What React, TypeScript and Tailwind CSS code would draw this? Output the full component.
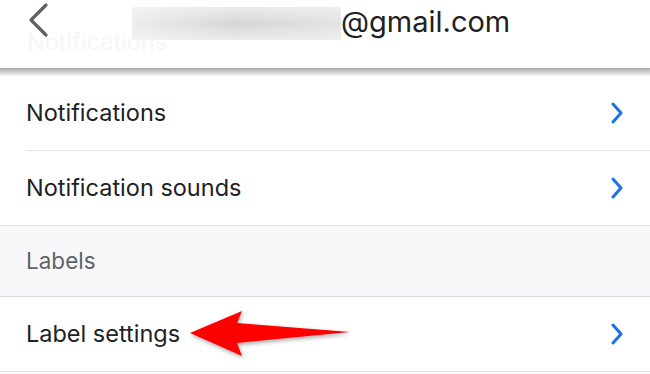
import React from "react";

const font = { fontFamily: "Inter, 'Noto Sans', 'Liberation Sans', sans-serif" };

function Chevron() {
  return (
    <svg width="14" height="22" viewBox="0 0 14 22" className="shrink-0">
      <path d="M3 2 L11 11 L3 20" fill="none" stroke="#1a73e8" strokeWidth="3" strokeLinecap="round" strokeLinejoin="round" />
    </svg>
  );
}

export default function App() {
  return (
    <div className="w-[650px] h-[374px] bg-white overflow-hidden relative text-[#202124]" style={font}>
      {/* header */}
      <div className="relative h-[68px] bg-white">
        <div className="absolute left-[27px] top-[30px] text-[23.5px] text-[#f6f6f6] leading-none">Notifications</div>
        <svg className="absolute left-[24px] top-[2px]" width="28" height="36" viewBox="0 0 28 36">
          <path d="M22 3 L7 18 L22 33" fill="none" stroke="#5f6368" strokeWidth="3.2" strokeLinecap="round" strokeLinejoin="round" />
        </svg>
        <div className="absolute left-[132px] top-[7px] w-[209px] h-[33px] bg-gradient-to-r from-[#ededed] via-[#d6d6d6] to-[#e2e2e2]">
          <div className="w-full h-full bg-gradient-to-b from-[#f4f4f4]/70 via-transparent to-[#f4f4f4]/70" />
        </div>
        <div className="absolute left-[341px] top-[2px] text-[29px] leading-[40px] text-[#202124]">@gmail.com</div>
      </div>
      {/* shadow bar */}
      <div className="h-[8px] bg-gradient-to-b from-[#a9a9a9] via-[#cfcfcf] to-[#f4f4f4]" />
      {/* rows */}
      <div className="pl-[26px]">
        <div className="h-[75px] flex items-center justify-between pr-[26px] border-b border-[#e6e6e6]">
          <span className="text-[23.5px]">Notifications</span>
          <Chevron />
        </div>
      </div>
      <div className="h-[75px] flex items-center justify-between pl-[26px] pr-[26px] border-b border-[#e2e2e2]">
        <span className="text-[23.5px]">Notification sounds</span>
        <Chevron />
      </div>
      <div className="h-[71px] flex items-center pl-[26px] bg-[#f7f8fa] border-b border-[#dadce0]">
        <span className="text-[22.5px] text-[#5f6368]">Labels</span>
      </div>
      <div className="h-[75px] flex items-center justify-between pl-[26px] pr-[26px] border-b border-[#e2e2e2]">
        <span className="text-[23.5px]">Label settings</span>
        <Chevron />
      </div>
      {/* red arrow */}
      <svg className="absolute left-[180px] top-[300px]" width="180" height="70" viewBox="0 0 180 70">
        <defs>
          <filter id="sh" x="-20%" y="-30%" width="140%" height="160%">
            <feDropShadow dx="1" dy="2" stdDeviation="2" floodColor="#000" floodOpacity="0.35" />
          </filter>
        </defs>
        <polygon points="10,33 62,11 57,23 170,32 57,43 62,56" fill="#ff0000" filter="url(#sh)" />
      </svg>
    </div>
  );
}
